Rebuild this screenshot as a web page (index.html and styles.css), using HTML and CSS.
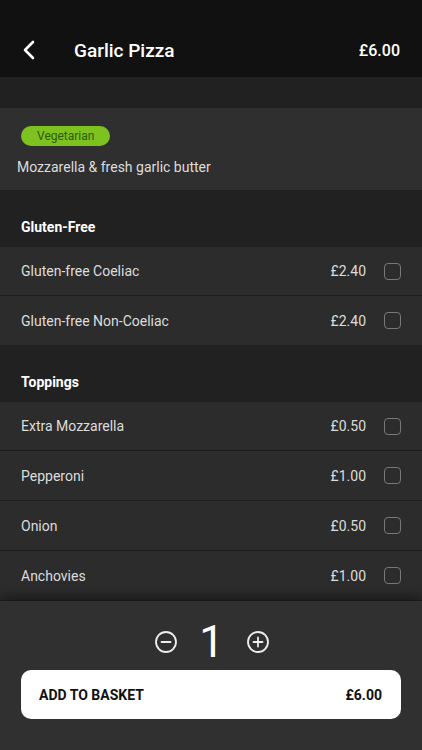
FILE: index.html
```html
<!DOCTYPE html>
<html lang="en">
<head>
    <meta charset="UTF-8">
    <meta name="viewport" content="width=device-width, initial-scale=1.0">
    <title>Garlic Pizza</title>
    <link rel="stylesheet" href="styles.css">
</head>
<body>
    <header class="topbar">
        <svg class="back" width="14" height="20" viewBox="0 0 14 20">
            <path d="M11 2 L3 10 L11 18" fill="none" stroke="#fff" stroke-width="2.6" stroke-linecap="round" stroke-linejoin="round"/>
        </svg>
        <h1 class="title">Garlic Pizza</h1>
        <span class="top-price">£6.00</span>
    </header>

    <div class="gap"></div>

    <section class="info">
        <span class="badge">Vegetarian</span>
        <p class="desc">Mozzarella &amp; fresh garlic butter</p>
    </section>

    <h2 class="section-title">Gluten-Free</h2>
    <div class="option-list">
        <div class="option"><span class="name">Gluten-free Coeliac</span><span class="price">£2.40</span><span class="check"></span></div>
        <div class="option"><span class="name">Gluten-free Non-Coeliac</span><span class="price">£2.40</span><span class="check"></span></div>
    </div>

    <h2 class="section-title">Toppings</h2>
    <div class="option-list">
        <div class="option"><span class="name">Extra Mozzarella</span><span class="price">£0.50</span><span class="check"></span></div>
        <div class="option"><span class="name">Pepperoni</span><span class="price">£1.00</span><span class="check"></span></div>
        <div class="option"><span class="name">Onion</span><span class="price">£0.50</span><span class="check"></span></div>
        <div class="option"><span class="name">Anchovies</span><span class="price">£1.00</span><span class="check"></span></div>
    </div>

    <footer class="bottom">
        <div class="qty">
            <svg width="24" height="24" viewBox="0 0 24 24">
                <circle cx="12" cy="12" r="10" fill="none" stroke="#eee" stroke-width="1.8"/>
                <path d="M7.5 12 H16.5" stroke="#eee" stroke-width="1.8" stroke-linecap="round"/>
            </svg>
            <span class="count">1</span>
            <svg width="24" height="24" viewBox="0 0 24 24">
                <circle cx="12" cy="12" r="10" fill="none" stroke="#eee" stroke-width="1.8"/>
                <path d="M7.5 12 H16.5 M12 7.5 V16.5" stroke="#eee" stroke-width="1.8" stroke-linecap="round"/>
            </svg>
        </div>
        <button class="add">
            <span>ADD TO BASKET</span>
            <span>£6.00</span>
        </button>
    </footer>
</body>
</html>
```

FILE: styles.css
```css
body {
    font-family: Roboto, "Noto Sans", sans-serif;
    margin: 0;
    padding: 0;
    background-color: #212121;
    color: #fff;
    width: 422px;
    height: 750px;
    overflow: hidden;
}

.topbar {
    height: 77px;
    background: #111;
    display: flex;
    align-items: center;
    padding: 23px 22px 0 22px;
    box-sizing: border-box;
}

.back {
    flex: none;
}

.title {
    font-size: 19px;
    font-weight: 500;
    margin: 0 0 0 38px;
    flex: 1;
}

.top-price {
    font-size: 16px;
    font-weight: 500;
}

.gap {
    height: 31px;
}

.info {
    background: #2f2f2f;
    height: 82px;
    padding: 17px 17px 0 17px;
    box-sizing: border-box;
}

.badge {
    display: inline-block;
    background: #7dc21e;
    color: #2f5a07;
    font-size: 12px;
    line-height: 20px;
    padding: 0 16px;
    border-radius: 10px;
    margin-left: 4px;
}

.desc {
    margin: 13px 0 0;
    font-size: 14px;
    color: #ddd;
}

.section-title {
    font-size: 14px;
    font-weight: 700;
    margin: 0;
    padding: 29px 21px 0;
    height: 57px;
    box-sizing: border-box;
}

.option-list {
    display: flex;
    flex-direction: column;
    gap: 1px;
    background: #1c1c1c;
}

.option {
    display: flex;
    align-items: center;
    height: 49px;
    background: #2c2c2c;
    padding: 0 21px;
    font-size: 14px;
    color: #ddd;
}

.option:first-child {
    height: 48px;
}

.name {
    flex: 1;
}

.price {
    margin-right: 18px;
}

.check {
    width: 15px;
    height: 15px;
    border: 1.5px solid #787878;
    border-radius: 4px;
}

.bottom {
    margin-top: 1px;
    background: #303030;
    box-shadow: 0 -6px 10px rgba(0, 0, 0, 0.35);
    height: 150px;
    padding: 0 21px;
    position: relative;
}

.qty {
    display: flex;
    justify-content: center;
    align-items: center;
    gap: 21px;
    height: 57px;
    padding-top: 12px;
    padding-left: 1px;
}

.count {
    font-size: 44px;
    font-weight: 400;
    width: 26px;
    text-align: center;
}

.add {
    width: 100%;
    height: 49px;
    background: #fff;
    border: none;
    border-radius: 10px;
    display: flex;
    justify-content: space-between;
    align-items: center;
    padding: 0 19px 0 18px;
    font-family: Roboto, sans-serif;
    font-size: 14px;
    font-weight: 700;
    color: #111;
}
```
